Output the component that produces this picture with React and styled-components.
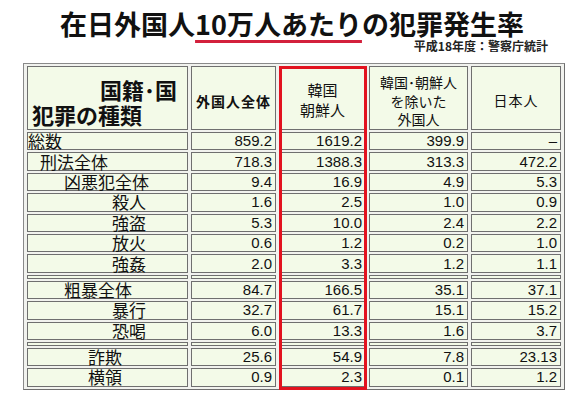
import React from "react";
import styled, { createGlobalStyle } from "styled-components";

const GlobalStyle = createGlobalStyle`
  * { box-sizing: border-box; }
  html, body { margin: 0; padding: 0; background: #ffffff; }
  body { font-family: "Noto Sans CJK JP", "Liberation Sans", sans-serif; color: #111; }
`;

const Page = styled.div`
  width: 584px;
  height: 404px;
  overflow: hidden;
  background: #ffffff;
`;

const Title = styled.h1`
  margin: 9px 0 0 0;
  height: 30px;
  line-height: 30px;
  font-size: 27px;
  font-weight: 700;
  text-align: center;
  color: #111;
  white-space: nowrap;
`;

const Mark = styled.span`
  text-decoration: underline;
  text-decoration-color: #d3203c;
  text-decoration-thickness: 3px;
  text-underline-offset: 5px;
`;

const Source = styled.div`
  margin-top: 0;
  height: 14px;
  line-height: 14px;
  padding-right: 36px;
  text-align: right;
  font-size: 12px;
  font-weight: 700;
  color: #222;
`;

const Grid = styled.div`
  position: relative;
  margin: 10px 0 0 23px;
  width: 542px;
  display: grid;
  grid-template-columns: 161px 85px 87px 99px 90px;
  grid-template-rows: 64px repeat(7, 18.4px) 4px repeat(3, 18.4px) 4px repeat(2, 18.4px);
  column-gap: 3px;
  row-gap: 2px;
  padding: 2px 3px;
  border: 1px solid #8a8a8a;
  border-right-color: #6e6e6e;
  border-bottom-color: #6e6e6e;
  background: #f1f2ee;
`;

const Cell = styled.div`
  background: #f3fae8;
  border: 1px solid #6f6f6f;
  display: flex;
  align-items: center;
  justify-content: ${(p) => (p.$num ? "flex-end" : "flex-start")};
  padding: ${(p) => (p.$num ? "0 3px 0 0" : `0 0 0 ${p.$indent || 0}px`)};
  font-family: ${(p) =>
    p.$num ? '"Liberation Sans", Arial, sans-serif' : '"Noto Sans CJK JP", sans-serif'};
  font-size: ${(p) => (p.$num ? "15px" : "17px")};
  line-height: 16px;
  white-space: nowrap;
`;

const Spacer = styled.div`
  background: #f3fae8;
  border: 1px solid #6f6f6f;
`;

const HeadMain = styled.div`
  background: #f3fae8;
  border: 1px solid #6f6f6f;
  display: flex;
  flex-direction: column;
  padding: 10px 10px 0 4px;
  font-size: 22px;
  font-weight: 700;
  line-height: 25px;
  white-space: nowrap;
`;

const HeadLine = styled.div`
  text-align: ${(p) => p.$align || "left"};
`;

const HeadCell = styled.div`
  background: #f3fae8;
  border: 1px solid #6f6f6f;
  display: flex;
  flex-direction: column;
  align-items: center;
  justify-content: center;
  text-align: center;
  font-size: ${(p) => p.$size || 15}px;
  font-weight: ${(p) => (p.$bold ? 700 : 400)};
  line-height: ${(p) => p.$lh || 20}px;
  letter-spacing: ${(p) => p.$ls || 0}px;
  padding-top: ${(p) => p.$pt || 0}px;
  white-space: nowrap;
`;

const RedFrame = styled.div`
  position: absolute;
  grid-column: 3 / 4;
  grid-row: 1 / -1;
  top: 0;
  left: 0;
  right: -1px;
  bottom: -3px;
  border: 3px solid #e2121f;
  pointer-events: none;
`;

const rows = [
  { label: "総数", indent: 0, v: ["859.2", "1619.2", "399.9", "–"] },
  { label: "刑法全体", indent: 12, v: ["718.3", "1388.3", "313.3", "472.2"] },
  { label: "凶悪犯全体", indent: 36, v: ["9.4", "16.9", "4.9", "5.3"] },
  { label: "殺人", indent: 84, v: ["1.6", "2.5", "1.0", "0.9"] },
  { label: "強盗", indent: 84, v: ["5.3", "10.0", "2.4", "2.2"] },
  { label: "放火", indent: 84, v: ["0.6", "1.2", "0.2", "1.0"] },
  { label: "強姦", indent: 84, v: ["2.0", "3.3", "1.2", "1.1"] },
  { sep: true },
  { label: "粗暴全体", indent: 36, v: ["84.7", "166.5", "35.1", "37.1"] },
  { label: "暴行", indent: 84, v: ["32.7", "61.7", "15.1", "15.2"] },
  { label: "恐喝", indent: 84, v: ["6.0", "13.3", "1.6", "3.7"] },
  { sep: true },
  { label: "詐欺", indent: 60, v: ["25.6", "54.9", "7.8", "23.13"] },
  { label: "横領", indent: 60, v: ["0.9", "2.3", "0.1", "1.2"] },
];

export default function App() {
  return (
    <Page>
      <GlobalStyle />
      <Title>
        在日外国人<Mark>10万人あたり</Mark>の犯罪発生率
      </Title>
      <Source>平成18年度：警察庁統計</Source>
      <Grid>
        <HeadMain>
          <HeadLine $align="right">国籍･国</HeadLine>
          <HeadLine>犯罪の種類</HeadLine>
        </HeadMain>
        <HeadCell $size={14} $bold $ls={1} $pt={6}>外国人全体</HeadCell>
        <HeadCell $size={15} $lh={20} $pt={4}>
          <span>韓国</span>
          <span>朝鮮人</span>
        </HeadCell>
        <HeadCell $size={14} $lh={18.5} $pt={6}>
          <span>韓国･朝鮮人</span>
          <span>を除いた</span>
          <span>外国人</span>
        </HeadCell>
        <HeadCell $size={14} $ls={1} $pt={4}>日本人</HeadCell>
        {rows.map((r, i) =>
          r.sep ? (
            <React.Fragment key={i}>
              <Spacer />
              <Spacer />
              <Spacer />
              <Spacer />
              <Spacer />
            </React.Fragment>
          ) : (
            <React.Fragment key={i}>
              <Cell $indent={r.indent}>{r.label}</Cell>
              {r.v.map((val, j) => (
                <Cell key={j} $num>
                  {val}
                </Cell>
              ))}
            </React.Fragment>
          )
        )}
        <RedFrame />
      </Grid>
    </Page>
  );
}
